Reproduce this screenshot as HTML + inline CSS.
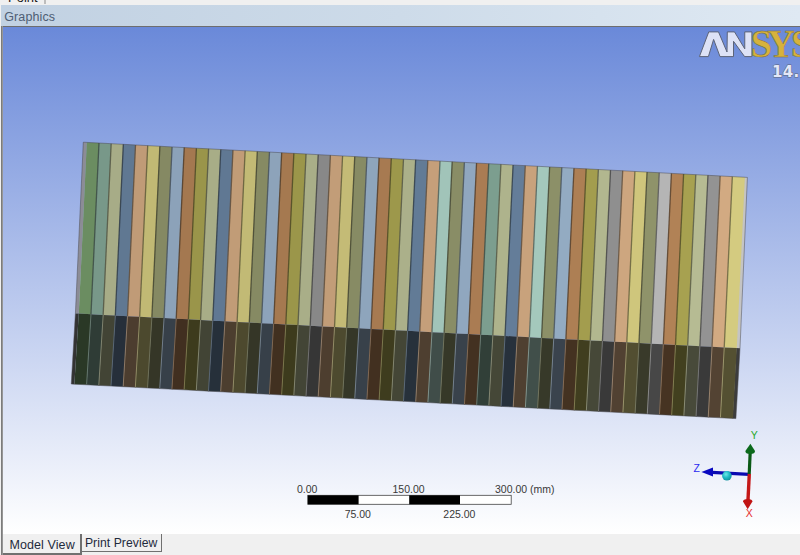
<!DOCTYPE html>
<html><head><meta charset="utf-8"><title>Graphics</title>
<style>
html,body{margin:0;padding:0}
body{width:800px;height:555px;overflow:hidden;background:#f0f0f0;position:relative;font-family:"Liberation Sans",sans-serif}
.top{position:absolute;left:0;top:0;width:800px;height:5px;background:#f0f0f0;overflow:hidden}
.top span{position:absolute;left:8px;top:-8.7px;font-size:13px;color:#1a1a1a;line-height:13px}
.top i{position:absolute;left:44px;top:0;width:2px;height:4px;background:#bdbdbd}
.hdr{position:absolute;left:1px;top:5px;width:799px;height:21px;background:linear-gradient(90deg,#c1d1e2 0%,#cddbe9 50%,#dfe9f3 100%);color:#4e5e74;font-size:12.5px;line-height:21px}
.hdr span{position:absolute;left:3.2px;top:1.7px;letter-spacing:0.12px}
.vp{position:absolute;left:3px;top:26px;width:797px;height:508px;background:#6e6e6e;overflow:hidden}
.vp svg{position:absolute;left:-3px;top:-26px}
.bot{position:absolute;left:0;top:534px;width:800px;height:21px;background:#f0f0f0}
.lb{position:absolute;left:1px;top:26px;width:2px;height:529px;background:linear-gradient(90deg,rgba(95,95,95,0.8) 0 50%,rgba(95,95,95,0.62) 50% 100%)}
.tab{position:absolute;font-size:12.5px;color:#1e2a3c;white-space:nowrap}
.t1{left:3px;top:534px;width:77px;height:19px;background:#f0f0f0;border-right:2px solid #707070;border-bottom:2px solid #707070}
.t1 span{position:absolute;left:6.4px;letter-spacing:0.1px;top:4.2px;line-height:14px}
.t2{left:82px;top:534px;width:78.5px;height:17px;background:#f0f0f0;border-right:1.7px solid #707070;border-bottom:1.8px solid #707070;font-size:12.2px}
.t2 span{position:absolute;left:2.9px;letter-spacing:0.05px;top:2.3px;line-height:14px}
</style></head><body>
<div class="top"><span>Point</span><i></i></div>
<div class="hdr"><span>Graphics</span></div>
<div class="vp">
<svg width="800" height="555" viewBox="0 0 800 555">
<defs>
<linearGradient id="bg" x1="0" y1="0" x2="0" y2="1"><stop offset="0" stop-color="#6a89d9"/><stop offset="1" stop-color="#ffffff"/></linearGradient>
<radialGradient id="sph" cx="0.4" cy="0.35" r="0.7"><stop offset="0" stop-color="#6ee6ea"/><stop offset="0.5" stop-color="#1fbcc4"/><stop offset="1" stop-color="#0e8d98"/></radialGradient>
</defs>
<rect x="3" y="27" width="797" height="507" fill="url(#bg)"/>
<g shape-rendering="geometricPrecision">
<polygon points="83.30,142.20 86.80,142.40 78.80,313.60 75.40,313.40" fill="#8c8c96"/>
<polygon points="75.40,313.40 78.80,313.60 74.40,384.15 71.25,384.00" fill="#333333"/>
<polygon points="744.50,177.25 747.40,177.40 740.00,348.30 736.40,348.10" fill="#c4c4c4"/>
<polygon points="736.40,348.10 740.00,348.30 735.90,418.60 732.60,418.45" fill="#3c3c3c"/>
<polygon points="86.80,142.40 99.38,143.05 91.38,314.24 78.80,313.60" fill="#6b8d61"/>
<polygon points="98.98,143.05 111.56,143.69 103.56,314.88 90.98,314.24" fill="#789889"/>
<polygon points="111.16,143.69 123.74,144.34 115.73,315.52 103.16,314.88" fill="#a7ac87"/>
<polygon points="123.34,144.34 135.92,144.98 127.91,316.16 115.33,315.52" fill="#607892"/>
<polygon points="135.52,144.98 148.10,145.63 140.09,316.79 127.51,316.16" fill="#c09b77"/>
<polygon points="147.70,145.63 160.28,146.27 152.27,317.43 139.69,316.79" fill="#c1b974"/>
<polygon points="159.88,146.27 172.46,146.92 164.44,318.07 151.87,317.43" fill="#858963"/>
<polygon points="172.06,146.92 184.64,147.56 176.62,318.71 164.04,318.07" fill="#8ca2b9"/>
<polygon points="184.24,147.56 196.82,148.21 188.80,319.35 176.22,318.71" fill="#a47850"/>
<polygon points="196.42,148.21 209.00,148.85 200.98,319.99 188.40,319.35" fill="#9a954a"/>
<polygon points="208.60,148.85 221.18,149.50 213.16,320.63 200.58,319.99" fill="#a8ad87"/>
<polygon points="220.78,149.50 233.36,150.14 225.33,321.27 212.76,320.63" fill="#607893"/>
<polygon points="232.96,150.14 245.54,150.79 237.51,321.91 224.93,321.27" fill="#c19c77"/>
<polygon points="245.14,150.79 257.71,151.44 249.69,322.54 237.11,321.91" fill="#c2ba75"/>
<polygon points="257.31,151.44 269.89,152.08 261.87,323.18 249.29,322.54" fill="#868a63"/>
<polygon points="269.49,152.08 282.07,152.73 274.04,323.82 261.47,323.18" fill="#8da3ba"/>
<polygon points="281.67,152.73 294.25,153.37 286.22,324.46 273.64,323.82" fill="#a57950"/>
<polygon points="293.85,153.37 306.43,154.02 298.40,325.10 285.82,324.46" fill="#9b964a"/>
<polygon points="306.03,154.02 318.61,154.66 310.58,325.74 298.00,325.10" fill="#a9ae88"/>
<polygon points="318.21,154.66 330.79,155.31 322.76,326.38 310.18,325.74" fill="#888888"/>
<polygon points="330.39,155.31 342.97,155.95 334.93,327.02 322.36,326.38" fill="#c29d78"/>
<polygon points="342.57,155.95 355.15,156.60 347.11,327.66 334.53,327.02" fill="#c4bb76"/>
<polygon points="354.75,156.60 367.33,157.24 359.29,328.29 346.71,327.66" fill="#878b64"/>
<polygon points="366.93,157.24 379.51,157.89 371.47,328.93 358.89,328.29" fill="#8ea5bc"/>
<polygon points="379.11,157.89 391.69,158.53 383.64,329.57 371.07,328.93" fill="#a77a51"/>
<polygon points="391.29,158.53 403.87,159.18 395.82,330.21 383.24,329.57" fill="#9d984b"/>
<polygon points="403.47,159.18 416.05,159.82 408.00,330.85 395.42,330.21" fill="#abb08a"/>
<polygon points="415.65,159.82 428.23,160.47 420.18,331.49 407.60,330.85" fill="#627b96"/>
<polygon points="427.83,160.47 440.41,161.12 432.36,332.13 419.78,331.49" fill="#c59f7a"/>
<polygon points="440.01,161.12 452.59,161.76 444.53,332.77 431.96,332.13" fill="#a1c4b9"/>
<polygon points="452.19,161.76 464.77,162.41 456.71,333.41 444.13,332.77" fill="#898d66"/>
<polygon points="464.37,162.41 476.95,163.05 468.89,334.04 456.31,333.41" fill="#90a7bf"/>
<polygon points="476.55,163.05 489.13,163.70 481.07,334.68 468.49,334.04" fill="#aa7c53"/>
<polygon points="488.73,163.70 501.31,164.34 493.24,335.32 480.67,334.68" fill="#7c9e8f"/>
<polygon points="500.91,164.34 513.49,164.99 505.42,335.96 492.84,335.32" fill="#aeb38c"/>
<polygon points="513.09,164.99 525.67,165.63 517.60,336.60 505.02,335.96" fill="#647d99"/>
<polygon points="525.27,165.63 537.85,166.28 529.78,337.24 517.20,336.60" fill="#c8a27c"/>
<polygon points="537.45,166.28 550.03,166.92 541.96,337.88 529.38,337.24" fill="#a4c8bc"/>
<polygon points="549.63,166.92 562.21,167.57 554.13,338.52 541.56,337.88" fill="#8c9068"/>
<polygon points="561.81,167.57 574.39,168.21 566.31,339.16 553.73,338.52" fill="#93abc2"/>
<polygon points="573.99,168.21 586.56,168.86 578.49,339.79 565.91,339.16" fill="#ad7f54"/>
<polygon points="586.16,168.86 598.74,169.51 590.67,340.43 578.09,339.79" fill="#a39d4e"/>
<polygon points="598.34,169.51 610.92,170.15 602.84,341.07 590.27,340.43" fill="#b2b78f"/>
<polygon points="610.52,170.15 623.10,170.80 615.02,341.71 602.44,341.07" fill="#8f8f8f"/>
<polygon points="622.70,170.80 635.28,171.44 627.20,342.35 614.62,341.71" fill="#cda67f"/>
<polygon points="634.88,171.44 647.46,172.09 639.38,342.99 626.80,342.35" fill="#cfc67c"/>
<polygon points="647.06,172.09 659.64,172.73 651.56,343.63 638.98,342.99" fill="#8f936a"/>
<polygon points="659.24,172.73 671.82,173.38 663.73,344.27 651.16,343.63" fill="#b5b5b5"/>
<polygon points="671.42,173.38 684.00,174.02 675.91,344.91 663.33,344.27" fill="#b18256"/>
<polygon points="683.60,174.02 696.18,174.67 688.09,345.54 675.51,344.91" fill="#a7a150"/>
<polygon points="695.78,174.67 708.36,175.31 700.27,346.18 687.69,345.54" fill="#b6bb93"/>
<polygon points="707.96,175.31 720.54,175.96 712.44,346.82 699.87,346.18" fill="#939393"/>
<polygon points="720.14,175.96 732.72,176.60 724.62,347.46 712.04,346.82" fill="#d2aa82"/>
<polygon points="732.32,176.60 744.90,177.25 736.80,348.10 724.22,347.46" fill="#d4cb80"/>
<polygon points="78.80,313.60 91.38,314.24 86.99,384.79 74.40,384.15" fill="#2a3826"/>
<polygon points="90.98,314.24 103.56,314.88 99.18,385.42 86.59,384.79" fill="#2f3c36"/>
<polygon points="103.16,314.88 115.73,315.52 111.37,386.06 98.78,385.42" fill="#424435"/>
<polygon points="115.33,315.52 127.91,316.16 123.56,386.69 110.97,386.06" fill="#262f3a"/>
<polygon points="127.51,316.16 140.09,316.79 135.74,387.33 123.16,386.69" fill="#4c3d2f"/>
<polygon points="139.69,316.79 152.27,317.43 147.93,387.96 135.34,387.33" fill="#4c492e"/>
<polygon points="151.87,317.43 164.44,318.07 160.12,388.60 147.53,387.96" fill="#353627"/>
<polygon points="164.04,318.07 176.62,318.71 172.31,389.23 159.72,388.60" fill="#374049"/>
<polygon points="176.22,318.71 188.80,319.35 184.50,389.87 171.91,389.23" fill="#412f20"/>
<polygon points="188.40,319.35 200.98,319.99 196.69,390.50 184.10,389.87" fill="#3d3b1d"/>
<polygon points="200.58,319.99 213.16,320.63 208.88,391.14 196.29,390.50" fill="#424435"/>
<polygon points="212.76,320.63 225.33,321.27 221.07,391.77 208.48,391.14" fill="#26303a"/>
<polygon points="224.93,321.27 237.51,321.91 233.26,392.41 220.67,391.77" fill="#4c3e2f"/>
<polygon points="237.11,321.91 249.69,322.54 245.44,393.04 232.86,392.41" fill="#4d492e"/>
<polygon points="249.29,322.54 261.87,323.18 257.63,393.68 245.04,393.04" fill="#353627"/>
<polygon points="261.47,323.18 274.04,323.82 269.82,394.31 257.23,393.68" fill="#374049"/>
<polygon points="273.64,323.82 286.22,324.46 282.01,394.95 269.42,394.31" fill="#413020"/>
<polygon points="285.82,324.46 298.40,325.10 294.20,395.58 281.61,394.95" fill="#3d3b1d"/>
<polygon points="298.00,325.10 310.58,325.74 306.39,396.22 293.80,395.58" fill="#434536"/>
<polygon points="310.18,325.74 322.76,326.38 318.58,396.85 305.99,396.22" fill="#363636"/>
<polygon points="322.36,326.38 334.93,327.02 330.77,397.49 318.18,396.85" fill="#4d3e2f"/>
<polygon points="334.53,327.02 347.11,327.66 342.96,398.12 330.37,397.49" fill="#4d4a2f"/>
<polygon points="346.71,327.66 359.29,328.29 355.14,398.76 342.56,398.12" fill="#353728"/>
<polygon points="358.89,328.29 371.47,328.93 367.33,399.39 354.74,398.76" fill="#38414a"/>
<polygon points="371.07,328.93 383.64,329.57 379.52,400.03 366.93,399.39" fill="#423020"/>
<polygon points="383.24,329.57 395.82,330.21 391.71,400.66 379.12,400.03" fill="#3e3c1e"/>
<polygon points="395.42,330.21 408.00,330.85 403.90,401.30 391.31,400.66" fill="#444636"/>
<polygon points="407.60,330.85 420.18,331.49 416.09,401.94 403.50,401.30" fill="#27313b"/>
<polygon points="419.78,331.49 432.36,332.13 428.28,402.57 415.69,401.94" fill="#4e3f30"/>
<polygon points="431.96,332.13 444.53,332.77 440.47,403.21 427.88,402.57" fill="#404d49"/>
<polygon points="444.13,332.77 456.71,333.41 452.66,403.84 440.07,403.21" fill="#363828"/>
<polygon points="456.31,333.41 468.89,334.04 464.84,404.48 452.26,403.84" fill="#39424b"/>
<polygon points="468.49,334.04 481.07,334.68 477.03,405.11 464.44,404.48" fill="#433121"/>
<polygon points="480.67,334.68 493.24,335.32 489.22,405.75 476.63,405.11" fill="#313f38"/>
<polygon points="492.84,335.32 505.42,335.96 501.41,406.38 488.82,405.75" fill="#454737"/>
<polygon points="505.02,335.96 517.60,336.60 513.60,407.02 501.01,406.38" fill="#27313c"/>
<polygon points="517.20,336.60 529.78,337.24 525.79,407.65 513.20,407.02" fill="#4f4031"/>
<polygon points="529.38,337.24 541.96,337.88 537.98,408.29 525.39,407.65" fill="#414f4a"/>
<polygon points="541.56,337.88 554.13,338.52 550.17,408.92 537.58,408.29" fill="#373929"/>
<polygon points="553.73,338.52 566.31,339.16 562.36,409.56 549.77,408.92" fill="#3a434d"/>
<polygon points="565.91,339.16 578.49,339.79 574.54,410.19 561.96,409.56" fill="#443221"/>
<polygon points="578.09,339.79 590.67,340.43 586.73,410.83 574.14,410.19" fill="#403e1f"/>
<polygon points="590.27,340.43 602.84,341.07 598.92,411.46 586.33,410.83" fill="#464838"/>
<polygon points="602.44,341.07 615.02,341.71 611.11,412.10 598.52,411.46" fill="#393939"/>
<polygon points="614.62,341.71 627.20,342.35 623.30,412.73 610.71,412.10" fill="#514132"/>
<polygon points="626.80,342.35 639.38,342.99 635.49,413.37 622.90,412.73" fill="#524e31"/>
<polygon points="638.98,342.99 651.56,343.63 647.68,414.00 635.09,413.37" fill="#393a2a"/>
<polygon points="651.16,343.63 663.73,344.27 659.87,414.64 647.28,414.00" fill="#474747"/>
<polygon points="663.33,344.27 675.91,344.91 672.06,415.27 659.47,414.64" fill="#463322"/>
<polygon points="675.51,344.91 688.09,345.54 684.24,415.91 671.66,415.27" fill="#42401f"/>
<polygon points="687.69,345.54 700.27,346.18 696.43,416.54 683.84,415.91" fill="#484a3a"/>
<polygon points="699.87,346.18 712.44,346.82 708.62,417.18 696.03,416.54" fill="#3a3a3a"/>
<polygon points="712.04,346.82 724.62,347.46 720.81,417.81 708.22,417.18" fill="#534333"/>
<polygon points="724.22,347.46 736.80,348.10 733.00,418.45 720.41,417.81" fill="#545032"/>
<g stroke-width="1.3" opacity="0.85"><line x1="98.98" y1="143.05" x2="90.98" y2="314.24" stroke="#3c4c45"/><line x1="111.16" y1="143.69" x2="103.16" y2="314.88" stroke="#545643"/><line x1="123.34" y1="144.34" x2="115.33" y2="315.52" stroke="#303c49"/><line x1="135.52" y1="144.98" x2="127.51" y2="316.16" stroke="#604e3b"/><line x1="147.70" y1="145.63" x2="139.69" y2="316.79" stroke="#615c3a"/><line x1="159.88" y1="146.27" x2="151.87" y2="317.43" stroke="#434531"/><line x1="172.06" y1="146.92" x2="164.04" y2="318.07" stroke="#46515c"/><line x1="184.24" y1="147.56" x2="176.22" y2="318.71" stroke="#523c28"/><line x1="196.42" y1="148.21" x2="188.40" y2="319.35" stroke="#4d4a25"/><line x1="208.60" y1="148.85" x2="200.58" y2="319.99" stroke="#545644"/><line x1="220.78" y1="149.50" x2="212.76" y2="320.63" stroke="#303c49"/><line x1="232.96" y1="150.14" x2="224.93" y2="321.27" stroke="#604e3c"/><line x1="245.14" y1="150.79" x2="237.11" y2="321.91" stroke="#615d3a"/><line x1="257.31" y1="151.44" x2="249.29" y2="322.54" stroke="#434532"/><line x1="269.49" y1="152.08" x2="261.47" y2="323.18" stroke="#46525d"/><line x1="281.67" y1="152.73" x2="273.64" y2="323.82" stroke="#533d28"/><line x1="293.85" y1="153.37" x2="285.82" y2="324.46" stroke="#4e4b25"/><line x1="306.03" y1="154.02" x2="298.00" y2="325.10" stroke="#555744"/><line x1="318.21" y1="154.66" x2="310.18" y2="325.74" stroke="#444444"/><line x1="330.39" y1="155.31" x2="322.36" y2="326.38" stroke="#614f3c"/><line x1="342.57" y1="155.95" x2="334.53" y2="327.02" stroke="#625e3b"/><line x1="354.75" y1="156.60" x2="346.71" y2="327.66" stroke="#444632"/><line x1="366.93" y1="157.24" x2="358.89" y2="328.29" stroke="#47525e"/><line x1="379.11" y1="157.89" x2="371.07" y2="328.93" stroke="#543d29"/><line x1="391.29" y1="158.53" x2="383.24" y2="329.57" stroke="#4f4c25"/><line x1="403.47" y1="159.18" x2="395.42" y2="330.21" stroke="#565845"/><line x1="415.65" y1="159.82" x2="407.60" y2="330.85" stroke="#313e4b"/><line x1="427.83" y1="160.47" x2="419.78" y2="331.49" stroke="#62503d"/><line x1="440.01" y1="161.12" x2="431.96" y2="332.13" stroke="#51625c"/><line x1="452.19" y1="161.76" x2="444.13" y2="332.77" stroke="#454733"/><line x1="464.37" y1="162.41" x2="456.31" y2="333.41" stroke="#48545f"/><line x1="476.55" y1="163.05" x2="468.49" y2="334.04" stroke="#553e29"/><line x1="488.73" y1="163.70" x2="480.67" y2="334.68" stroke="#3e4f47"/><line x1="500.91" y1="164.34" x2="492.84" y2="335.32" stroke="#575a46"/><line x1="513.09" y1="164.99" x2="505.02" y2="335.96" stroke="#323f4c"/><line x1="525.27" y1="165.63" x2="517.20" y2="336.60" stroke="#64513e"/><line x1="537.45" y1="166.28" x2="529.38" y2="337.24" stroke="#52645e"/><line x1="549.63" y1="166.92" x2="541.56" y2="337.88" stroke="#464834"/><line x1="561.81" y1="167.57" x2="553.73" y2="338.52" stroke="#495561"/><line x1="573.99" y1="168.21" x2="565.91" y2="339.16" stroke="#573f2a"/><line x1="586.16" y1="168.86" x2="578.09" y2="339.79" stroke="#524f27"/><line x1="598.34" y1="169.51" x2="590.27" y2="340.43" stroke="#595b47"/><line x1="610.52" y1="170.15" x2="602.44" y2="341.07" stroke="#484848"/><line x1="622.70" y1="170.80" x2="614.62" y2="341.71" stroke="#66533f"/><line x1="634.88" y1="171.44" x2="626.80" y2="342.35" stroke="#67633e"/><line x1="647.06" y1="172.09" x2="638.98" y2="342.99" stroke="#484a35"/><line x1="659.24" y1="172.73" x2="651.16" y2="343.63" stroke="#5a5a5a"/><line x1="671.42" y1="173.38" x2="663.33" y2="344.27" stroke="#59412b"/><line x1="683.60" y1="174.02" x2="675.51" y2="344.91" stroke="#535028"/><line x1="695.78" y1="174.67" x2="687.69" y2="345.54" stroke="#5b5e49"/><line x1="707.96" y1="175.31" x2="699.87" y2="346.18" stroke="#4a4a4a"/><line x1="720.14" y1="175.96" x2="712.04" y2="346.82" stroke="#695541"/><line x1="732.32" y1="176.60" x2="724.22" y2="347.46" stroke="#6a6540"/></g>
<g stroke-width="1" opacity="0.85"><line x1="90.98" y1="314.24" x2="86.59" y2="384.79" stroke="#6e8178"/><line x1="103.16" y1="314.88" x2="98.78" y2="385.42" stroke="#8a8d77"/><line x1="115.33" y1="315.52" x2="110.97" y2="386.06" stroke="#5f6e7e"/><line x1="127.51" y1="316.16" x2="123.16" y2="386.69" stroke="#99836d"/><line x1="139.69" y1="316.79" x2="135.34" y2="387.33" stroke="#9a956c"/><line x1="151.87" y1="317.43" x2="147.53" y2="387.96" stroke="#767861"/><line x1="164.04" y1="318.07" x2="159.72" y2="388.60" stroke="#7a8795"/><line x1="176.22" y1="318.71" x2="171.91" y2="389.23" stroke="#896e56"/><line x1="188.40" y1="319.35" x2="184.10" y2="389.87" stroke="#837f52"/><line x1="200.58" y1="319.99" x2="196.29" y2="390.50" stroke="#8b8e77"/><line x1="212.76" y1="320.63" x2="208.48" y2="391.14" stroke="#606e7e"/><line x1="224.93" y1="321.27" x2="220.67" y2="391.77" stroke="#9a836d"/><line x1="237.11" y1="321.91" x2="232.86" y2="392.41" stroke="#9a956c"/><line x1="249.29" y1="322.54" x2="245.04" y2="393.04" stroke="#767962"/><line x1="261.47" y1="323.18" x2="257.23" y2="393.68" stroke="#7a8895"/><line x1="273.64" y1="323.82" x2="269.42" y2="394.31" stroke="#896f56"/><line x1="285.82" y1="324.46" x2="281.61" y2="394.95" stroke="#838052"/><line x1="298.00" y1="325.10" x2="293.80" y2="395.58" stroke="#8c8e78"/><line x1="310.18" y1="325.74" x2="305.99" y2="396.22" stroke="#787878"/><line x1="322.36" y1="326.38" x2="318.18" y2="396.85" stroke="#9b846e"/><line x1="334.53" y1="327.02" x2="330.37" y2="397.49" stroke="#9c966d"/><line x1="346.71" y1="327.66" x2="342.56" y2="398.12" stroke="#777a62"/><line x1="358.89" y1="328.29" x2="354.74" y2="398.76" stroke="#7b8997"/><line x1="371.07" y1="328.93" x2="366.93" y2="399.39" stroke="#8a6f57"/><line x1="383.24" y1="329.57" x2="379.12" y2="400.03" stroke="#848153"/><line x1="395.42" y1="330.21" x2="391.31" y2="400.66" stroke="#8d9079"/><line x1="407.60" y1="330.85" x2="403.50" y2="401.30" stroke="#617080"/><line x1="419.78" y1="331.49" x2="415.69" y2="401.94" stroke="#9c866f"/><line x1="431.96" y1="332.13" x2="427.88" y2="402.57" stroke="#879c95"/><line x1="444.13" y1="332.77" x2="440.07" y2="403.21" stroke="#787b63"/><line x1="456.31" y1="333.41" x2="452.26" y2="403.84" stroke="#7c8a98"/><line x1="468.49" y1="334.04" x2="464.44" y2="404.48" stroke="#8c7158"/><line x1="480.67" y1="334.68" x2="476.63" y2="405.11" stroke="#71857c"/><line x1="492.84" y1="335.32" x2="488.82" y2="405.75" stroke="#8f917a"/><line x1="505.02" y1="335.96" x2="501.01" y2="406.38" stroke="#627182"/><line x1="517.20" y1="336.60" x2="513.20" y2="407.02" stroke="#9e8770"/><line x1="529.38" y1="337.24" x2="525.39" y2="407.65" stroke="#899e97"/><line x1="541.56" y1="337.88" x2="537.58" y2="408.29" stroke="#7a7c64"/><line x1="553.73" y1="338.52" x2="549.77" y2="408.92" stroke="#7e8c9b"/><line x1="565.91" y1="339.16" x2="561.96" y2="409.56" stroke="#8e7259"/><line x1="578.09" y1="339.79" x2="574.14" y2="410.19" stroke="#888455"/><line x1="590.27" y1="340.43" x2="586.33" y2="410.83" stroke="#91947c"/><line x1="602.44" y1="341.07" x2="598.52" y2="411.46" stroke="#7c7c7c"/><line x1="614.62" y1="341.71" x2="610.71" y2="412.10" stroke="#a18972"/><line x1="626.80" y1="342.35" x2="622.90" y2="412.73" stroke="#a29d71"/><line x1="638.98" y1="342.99" x2="635.09" y2="413.37" stroke="#7c7e66"/><line x1="651.16" y1="343.63" x2="647.28" y2="414.00" stroke="#939393"/><line x1="663.33" y1="344.27" x2="659.47" y2="414.64" stroke="#90745a"/><line x1="675.51" y1="344.91" x2="671.66" y2="415.27" stroke="#8a8756"/><line x1="687.69" y1="345.54" x2="683.84" y2="415.91" stroke="#93967e"/><line x1="699.87" y1="346.18" x2="696.03" y2="416.54" stroke="#7e7e7e"/><line x1="712.04" y1="346.82" x2="708.22" y2="417.18" stroke="#a48c74"/><line x1="724.22" y1="347.46" x2="720.41" y2="417.81" stroke="#a5a073"/></g>
<polygon points="83.30,142.20 747.40,177.40 740.00,348.30 735.90,418.60 71.25,384.00 75.40,313.40" fill="none" stroke="#4a4a50" stroke-opacity="0.55" stroke-width="0.9"/>
</g>
<!-- logo -->
<g stroke="#5d6478" stroke-width="1" stroke-linejoin="miter" fill="#dde2f6">
<polygon points="699.4,56.6 708.75,31.9 718.5,31.9 727.0,52.0 727.3,31.9 734.5,31.9 744.75,48.8 744.75,31.9 751.9,31.9 751.9,56.6 744.6,56.6 733.5,41.3 733.5,56.6 720.0,56.6 713.6,39.4 708.4,56.6"/>
</g>
<g font-family="'Liberation Serif',serif" font-weight="bold" font-size="40" fill="#d6b23c" stroke="#7a6c3c" stroke-width="0.5">
<text transform="translate(750.7 57.1) scale(0.96 1)">S</text>
<text transform="translate(767.1 57.1) scale(0.96 1)">Y</text>
<text transform="translate(790.9 57.1) scale(0.96 1)">S</text>
</g>
<text x="771.9" y="77.4" letter-spacing="0.4" font-family="'DejaVu Sans',sans-serif" font-weight="bold" font-size="15" fill="#e3e7f8" stroke="#5d6478" stroke-width="0.9" paint-order="stroke">14.5</text>
<!-- scale bar -->
<g>
<rect x="307.8" y="495.3" width="203.4" height="9" fill="#ffffff" stroke="#444" stroke-width="0.8"/>
<rect x="307.8" y="495.3" width="50.8" height="9" fill="#000"/>
<rect x="409.2" y="495.3" width="50.8" height="9" fill="#000"/>
<g font-family="'Liberation Sans',sans-serif" font-size="10.5" fill="#383838" text-anchor="middle">
<text x="307.2" y="492.6">0.00</text>
<text x="408.6" y="492.6">150.00</text>
<text x="495" y="492.6" text-anchor="start" textLength="59.5">300.00 (mm)</text>
<text x="357.8" y="517.9">75.00</text>
<text x="459.4" y="517.9">225.00</text>
</g>
</g>
<!-- triad -->
<g>
<line x1="749" y1="474.3" x2="712" y2="472.4" stroke="#0a0ab0" stroke-width="3.2"/>
<polygon points="701.4,471.9 713,467.4 713,476.6" fill="#0808c0"/>
<line x1="749.2" y1="474" x2="750.2" y2="452" stroke="#0b5a16" stroke-width="3.2"/>
<path d="M750.4 443.8 L755 451 Q755.2 454 750.2 454 Q745.2 454 745.4 451 Z" fill="#0c6a1c"/>
<line x1="749.3" y1="474" x2="748" y2="500" stroke="#c41818" stroke-width="3.4"/>
<path d="M747.7 509.2 L743 501.5 Q743 499 747.8 499 Q752.4 499 752.4 501.5 Z" fill="#c01414"/>
<circle cx="726.9" cy="475.8" r="4.8" fill="url(#sph)"/>
<g font-family="'Liberation Sans',sans-serif" font-size="10.5">
<text x="750.8" y="439" fill="#28a828">Y</text>
<text x="693.4" y="472" fill="#2a2af0">Z</text>
<text x="745.8" y="517.2" fill="#e63030">X</text>
</g>
</g>
</svg>
</div>
<div class="bot"></div>
<div class="lb"></div>
<div class="tab t1"><span>Model View</span></div>
<div class="tab t2"><span>Print Preview</span></div>
</body></html>
